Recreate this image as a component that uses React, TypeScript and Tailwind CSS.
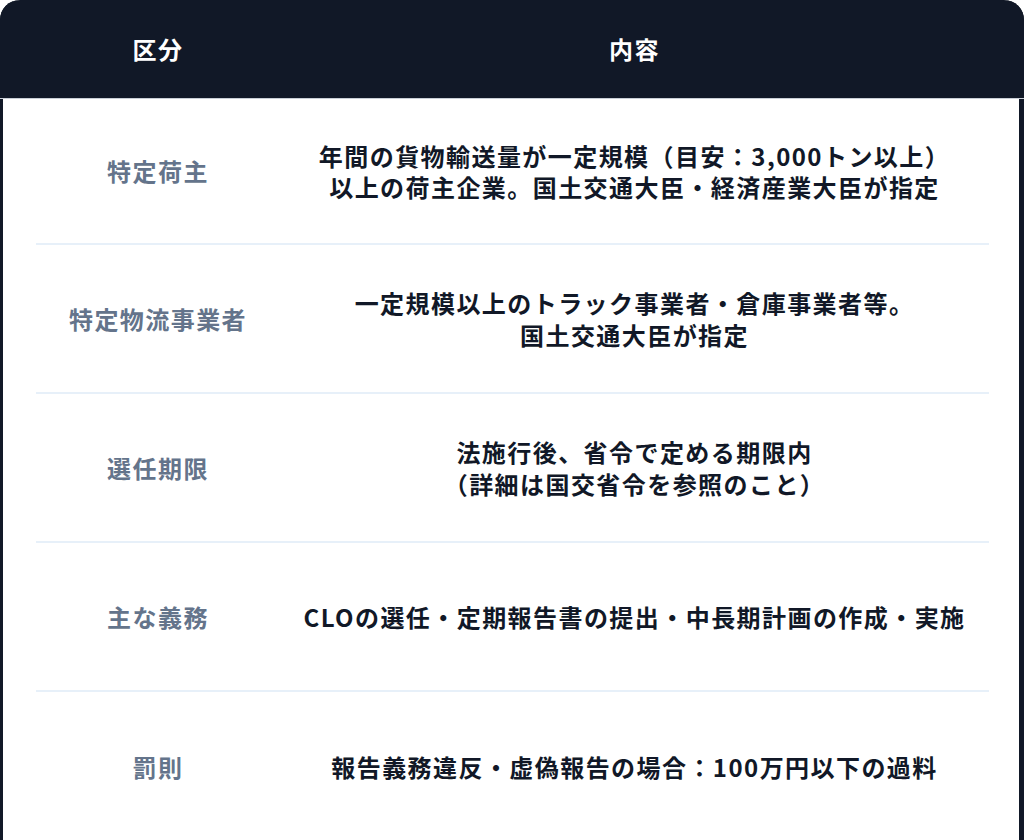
const rows: { label: string; lines: string[]; h: string }[] = [
  {
    label: "特定荷主",
    lines: ["年間の貨物輸送量が一定規模（目安：3,000トン以上）", "以上の荷主企業。国土交通大臣・経済産業大臣が指定"],
    h: "h-[146px]",
  },
  {
    label: "特定物流事業者",
    lines: ["一定規模以上のトラック事業者・倉庫事業者等。", "国土交通大臣が指定"],
    h: "h-[149px]",
  },
  {
    label: "選任期限",
    lines: ["法施行後、省令で定める期限内", "（詳細は国交省令を参照のこと）"],
    h: "h-[149px]",
  },
  {
    label: "主な義務",
    lines: ["CLOの選任・定期報告書の提出・中長期計画の作成・実施"],
    h: "h-[149px]",
  },
  {
    label: "罰則",
    lines: ["報告義務違反・虚偽報告の場合：100万円以下の過料"],
    h: "h-[149px]",
  },
];

export default function App() {
  return (
    <div
      className="min-h-[840px] w-[1024px] overflow-hidden bg-white"
      style={{ fontFamily: '"Noto Sans CJK JP", "Noto Sans", sans-serif' }}
    >
      <div className="rounded-t-[20px] border-l-[3px] border-r-[5px] border-[#111827] bg-white">
        {/* header */}
        <div className="-ml-[3px] -mr-[5px] flex h-[99px] items-center rounded-t-[20px] border-b border-[#c9ced6] bg-[#111827] pl-[36px] pr-[35px]">
          <div className="w-[244px] text-center text-[24px] font-bold leading-[1.3] tracking-[0.06em] text-white">
            区分
          </div>
          <div className="flex-1 text-center text-[24px] font-bold leading-[1.3] tracking-[0.06em] text-white">
            内容
          </div>
        </div>

        {/* body */}
        <div className="ml-[33px] mr-[30px]">
          {rows.map((row, i) => (
            <div
              key={row.label}
              className={`flex items-center ${row.h} ${i < rows.length - 1 ? "border-b-2 border-[#e7f0f9]" : ""}`}
            >
              <div className="w-[244px] text-center text-[24px] font-bold leading-[1.3] tracking-[0.06em] text-[#64748b]">
                {row.label}
              </div>
              <p className="flex-1 text-center text-[24px] font-bold leading-[1.3] tracking-[0.06em] text-[#111827]">
                {row.lines.map((line, j) => (
                  <span key={line}>
                    {j > 0 && <br />}
                    {line}
                  </span>
                ))}
              </p>
            </div>
          ))}
        </div>
      </div>
    </div>
  );
}
